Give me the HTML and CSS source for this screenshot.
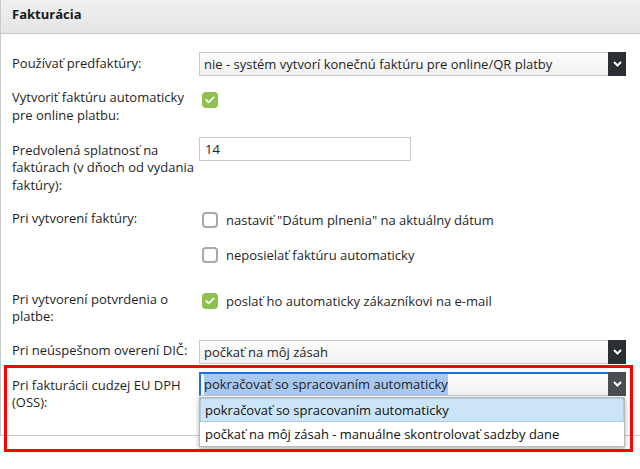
FILE: index.html
```html
<!DOCTYPE html>
<html lang="sk">
<head>
    <meta charset="UTF-8">
    <meta name="viewport" content="width=device-width, initial-scale=1.0">
    <title>Fakturácia</title>
    <link rel="stylesheet" href="styles.css">
</head>
<body>
    <div class="panel">
        <div class="panel-head">Fakturácia</div>
        <div class="panel-body">
            <div class="row row-1">
                <div class="label pad-select">Používať predfaktúry:</div>
                <div class="select">
                    <div class="select-value">nie - systém vytvorí konečnú faktúru pre online/QR platby</div>
                    <div class="select-arrow"><svg width="9" height="6" viewBox="0 0 9 6"><path d="M1 1l3.5 3.5L8 1" fill="none" stroke="#fff" stroke-width="2"/></svg></div>
                </div>
            </div>

            <div class="row row-2">
                <div class="label">Vytvoriť faktúru automaticky pre online platbu:</div>
                <div class="check-wrap"><span class="cb checked"><svg width="10" height="8" viewBox="0 0 10 8"><path d="M1.3 4l2.4 2.4L8.7 1.4" fill="none" stroke="#fff" stroke-width="1.8" stroke-linecap="round" stroke-linejoin="round"/></svg></span></div>
            </div>

            <div class="row row-3">
                <div class="label pad-input">Predvolená splatnosť na faktúrach (v dňoch od vydania faktúry):</div>
                <div class="input">14</div>
            </div>

            <div class="row row-4">
                <div class="label">Pri vytvorení faktúry:</div>
                <div class="checks">
                    <div class="opt"><span class="cb"></span>nastaviť "Dátum plnenia" na aktuálny dátum</div>
                    <div class="opt"><span class="cb"></span>neposielať faktúru automaticky</div>
                </div>
            </div>

            <div class="row row-5">
                <div class="label">Pri vytvorení potvrdenia o platbe:</div>
                <div class="checks">
                    <div class="opt"><span class="cb checked"><svg width="10" height="8" viewBox="0 0 10 8"><path d="M1.3 4l2.4 2.4L8.7 1.4" fill="none" stroke="#fff" stroke-width="1.8" stroke-linecap="round" stroke-linejoin="round"/></svg></span>poslať ho automaticky zákazníkovi na e-mail</div>
                </div>
            </div>

            <div class="row row-6">
                <div class="label pad-dic">Pri neúspešnom overení DIČ:</div>
                <div class="select">
                    <div class="select-value">počkať na môj zásah</div>
                    <div class="select-arrow"><svg width="9" height="6" viewBox="0 0 9 6"><path d="M1 1l3.5 3.5L8 1" fill="none" stroke="#fff" stroke-width="2"/></svg></div>
                </div>
            </div>

            <div class="row row-7">
                <div class="label pad-oss">Pri fakturácii cudzej EU DPH (OSS):</div>
                <div class="select focus">
                    <div class="select-value"><span class="sel-text">pokračovať so spracovaním automaticky</span></div>
                    <div class="select-arrow"><svg width="9" height="6" viewBox="0 0 9 6"><path d="M1 1l3.5 3.5L8 1" fill="none" stroke="#fff" stroke-width="2"/></svg></div>
                </div>
            </div>
        </div>
    </div>
    <div class="dropdown">
        <div class="dd-opt active">pokračovať so spracovaním automaticky</div>
        <div class="dd-opt">počkať na môj zásah - manuálne skontrolovať sadzby dane</div>
    </div>
    <div class="mark"></div>
</body>
</html>
```

FILE: styles.css
```css
body {
    margin: 0;
    font-family: "Open Sans", sans-serif;
    font-size: 13px;
    line-height: 17.5px;
    color: #1f1f1f;
    background: #fff;
}
.panel {
    height: 436px;
    box-sizing: border-box;
    border-left: 1px solid #c9c9c9;
    border-bottom: 1px solid #c9c9c9;
}
.panel-head {
    height: 33px;
    line-height: 29px;
    padding: 0 11px;
    font-weight: bold;
    color: #1a1a1a;
    background: linear-gradient(#eef0f1, #e3e5e7);
    border-bottom: 1px solid #c6c8ca;
}
.panel-body {
    padding: 18px 0 0 11px;
}
.row {
    display: grid;
    grid-template-columns: 187px 427px;
    align-items: start;
}
.row-2 { margin-top: 13px; }
.row-3 { margin-top: 13px; }
.row-4 { margin-top: 15.5px; }
.row-5 { margin-top: 26.5px; }
.row-6 { margin-top: 14px; }
.row-7 { margin-top: 8px; }

.label { padding-right: 4px; }
.pad-select { padding-top: 3px; }
.pad-input { padding-top: 4.5px; }
.pad-dic { padding-top: 2px; }
.pad-oss { padding-top: 5px; }

.select {
    display: flex;
    height: 24px;
}
.select-value {
    flex: 1;
    border: 1px solid #c9c9c9;
    border-right: 0;
    padding-left: 4px;
    line-height: 22px;
    background: linear-gradient(#fdfdfd, #f0f0f0);
    white-space: nowrap;
    overflow: hidden;
}
.select-arrow {
    width: 18px;
    background: #2b2f33;
    display: flex;
    align-items: center;
    justify-content: center;
}
.select.focus .select-value {
    border-top: 2px solid #1f6fe6;
    border-left: 2px solid #1f6fe6;
    padding-left: 3px;
    line-height: 21px;
}
.select.focus .select-arrow {
    background: #4a4d51;
}
.sel-text {
    background: #a9c8ef;
    padding: 1px 0 2px;
}

/* open list of the focused select, lies over the panel */
.dropdown {
    position: absolute;
    top: 397px;
    left: 199px;
    width: 426px;
    box-sizing: border-box;
    background: #fff;
    border: 1px solid #b9b9b9;
    box-shadow: 0 2px 5px rgba(0, 0, 0, 0.3);
}
.dd-opt {
    height: 24px;
    box-sizing: border-box;
    line-height: 22px;
    padding-left: 4px;
    border: 1px solid transparent;
    color: #111;
    white-space: nowrap;
}
.dd-opt.active {
    background: #cce4f7;
    border: 1px dotted #8fb3dc;
}

.input {
    width: 212px;
    height: 24px;
    box-sizing: border-box;
    border: 1px solid #c9c9c9;
    padding-left: 5px;
    line-height: 23px;
}

.cb {
    display: inline-flex;
    align-items: center;
    justify-content: center;
    width: 16px;
    height: 16px;
    box-sizing: border-box;
    border: 2px solid #a8a8a8;
    border-radius: 4px;
    background: #fff;
    margin-right: 8px;
    flex-shrink: 0;
}
.cb.checked {
    border: 0;
    background: #8ec04f;
}
.check-wrap {
    padding: 2px 0 0 3px;
    height: 16px;
}
.checks {
    padding: 2px 0 0 3px;
}
.opt {
    display: flex;
    align-items: center;
    height: 17.5px;
}
.opt + .opt { margin-top: 17.5px; }

.mark {
    position: absolute;
    left: 4px;
    top: 365px;
    width: 629px;
    height: 87px;
    box-sizing: border-box;
    border: 3px solid #f00;
}
```
